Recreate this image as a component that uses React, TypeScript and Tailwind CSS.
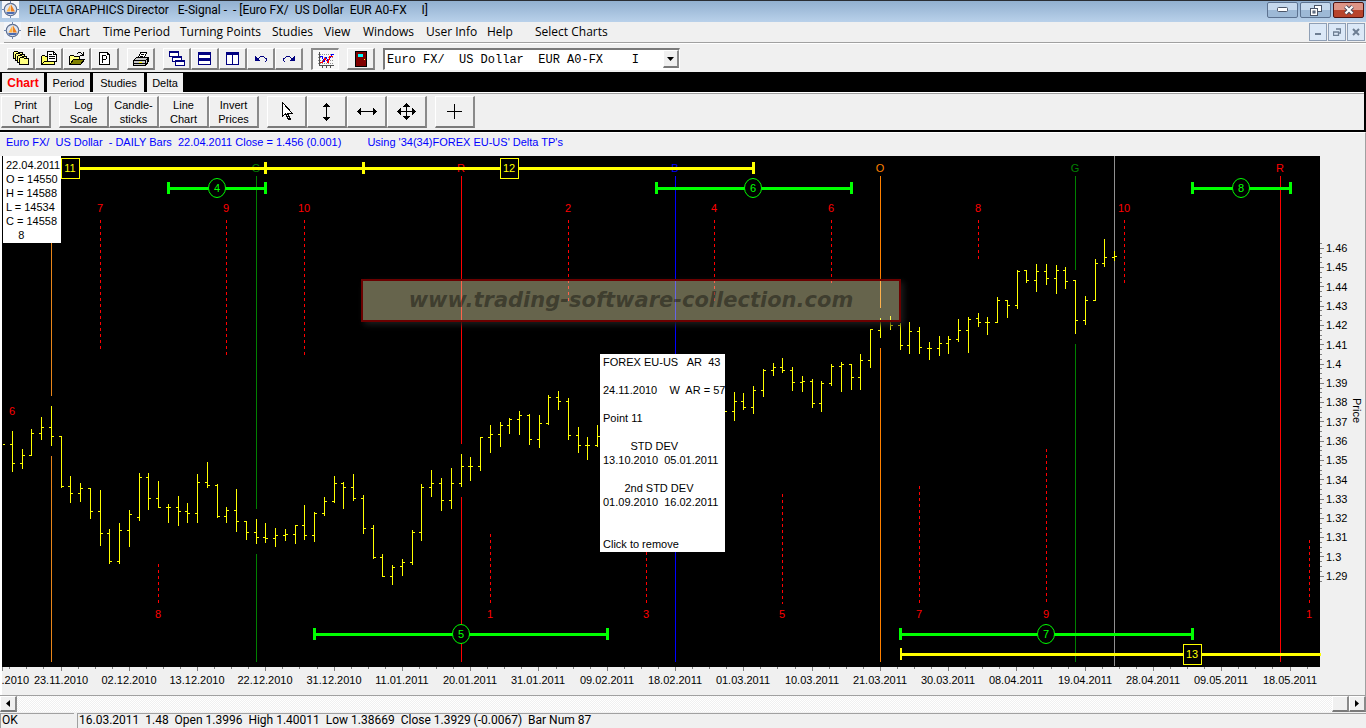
import type { ReactNode } from "react";

// x, high, low, open, close (canvas units)
const BARS: number[][] = [
  [12, 431, 472, 444, 463], [22, 449, 469, 463, 455], [31, 429, 456, 455, 433], [41, 417, 440, 433, 427],
  [51, 406, 446, 427, 436], [61, 436, 488, 436, 486], [70, 476, 503, 486, 493], [80, 483, 502, 493, 488],
  [90, 488, 519, 488, 511], [100, 490, 546, 511, 533], [109, 529, 564, 533, 561], [119, 523, 564, 561, 530],
  [129, 510, 547, 530, 514], [139, 473, 521, 517, 477], [148, 473, 510, 477, 498], [158, 481, 508, 498, 507],
  [168, 504, 523, 507, 507], [178, 496, 526, 507, 511], [187, 503, 523, 511, 513], [197, 474, 523, 513, 482],
  [207, 462, 488, 482, 485], [217, 484, 518, 485, 516], [226, 507, 523, 516, 510], [236, 489, 532, 510, 521],
  [246, 521, 540, 521, 532], [256, 519, 544, 532, 537], [265, 523, 543, 537, 538], [275, 528, 547, 538, 535],
  [285, 529, 541, 535, 534], [295, 525, 544, 534, 525], [304, 505, 540, 525, 535], [314, 512, 542, 535, 513],
  [324, 497, 516, 513, 501], [334, 476, 503, 501, 483], [343, 482, 509, 483, 487], [353, 474, 501, 487, 498],
  [363, 495, 534, 498, 528], [373, 525, 559, 528, 557], [382, 554, 577, 557, 576], [392, 565, 585, 576, 567],
  [402, 559, 576, 566, 562], [412, 530, 565, 562, 532], [421, 484, 541, 532, 487], [431, 470, 497, 487, 483],
  [441, 478, 511, 483, 500], [451, 468, 509, 500, 483], [461, 454, 487, 483, 466], [470, 457, 481, 466, 466],
  [480, 437, 471, 466, 437], [490, 425, 453, 437, 434], [500, 422, 447, 434, 425], [509, 418, 434, 425, 419],
  [519, 411, 435, 419, 415], [529, 414, 445, 415, 439], [539, 415, 448, 439, 423], [548, 395, 425, 423, 397],
  [558, 391, 410, 397, 401], [568, 398, 440, 401, 435], [578, 427, 453, 435, 445], [587, 437, 460, 445, 445],
  [597, 425, 447, 445, 436], [724, 405, 415, 409, 411], [734, 392, 421, 411, 401], [743, 393, 410, 401, 407],
  [753, 386, 414, 407, 390], [763, 369, 397, 390, 370], [773, 363, 376, 370, 367], [782, 358, 373, 367, 370],
  [792, 367, 391, 370, 382], [802, 376, 392, 382, 381], [812, 379, 408, 381, 403], [821, 381, 412, 403, 383],
  [831, 364, 386, 383, 366], [841, 362, 392, 366, 364], [851, 364, 390, 364, 377], [860, 354, 390, 377, 360],
  [870, 329, 368, 360, 329], [880, 318, 338, 330, 321], [890, 316, 330, 321, 325], [900, 323, 350, 325, 345],
  [909, 322, 354, 345, 331], [919, 327, 354, 331, 347], [929, 342, 360, 348, 348], [939, 336, 356, 348, 343],
  [948, 336, 354, 343, 339], [958, 319, 342, 339, 330], [968, 317, 353, 330, 319], [978, 313, 327, 318, 322],
  [987, 317, 335, 322, 322], [997, 297, 323, 322, 300], [1007, 300, 318, 300, 305], [1017, 270, 309, 305, 271],
  [1026, 270, 283, 270, 280], [1036, 264, 292, 280, 271], [1046, 264, 285, 271, 278], [1056, 265, 294, 278, 270],
  [1065, 267, 289, 270, 281], [1075, 280, 334, 280, 320], [1085, 296, 325, 320, 300], [1095, 259, 301, 300, 263],
  [1104, 239, 267, 263, 257], [1114, 251, 261, 257, 256],
];

const barPath =
  "M3 444.5H5" + BARS.map(([x, h, l, o, c]) => `M${x + 0.5} ${h}V${l}M${x - 2} ${o + 0.5}H${x + 1}M${x} ${c + 0.5}H${x + 3}`).join("");

// x, y1, y2, colour
const RULES: [number, number, number, string][] = [
  [51, 243, 396, "#e8851a"], [51, 456, 662, "#e8851a"],
  [256, 176, 509, "#008000"], [256, 554, 662, "#008000"],
  [461, 176, 444, "#ff0000"], [461, 497, 662, "#ff0000"],
  [675, 176, 662, "#0000ff"],
  [880, 176, 308, "#ff8000"], [880, 348, 662, "#ff8000"],
  [1075, 176, 270, "#008000"], [1075, 344, 662, "#008000"],
  [1114, 156, 666, "#909090"],
  [1280, 176, 662, "#ff0000"],
];

// x, y1, y2, label, label y
const POINTS: [number, number, number, string, number][] = [
  [100, 220, 349, "7", 212], [226, 220, 356, "9", 212], [304, 220, 356, "10", 212], [568, 220, 301, "2", 212],
  [714, 220, 302, "4", 212], [831, 220, 283, "6", 212], [978, 220, 260, "8", 212], [1124, 220, 283, "10", 212],
  [158, 564, 604, "8", 618], [490, 534, 604, "1", 618], [646, 552, 604, "3", 618], [782, 494, 604, "5", 618],
  [919, 486, 604, "7", 618], [1046, 449, 604, "9", 618], [1309, 540, 604, "1", 618],
];

const SEASONS: [number, string, string][] = [
  [256, "G", "#008000"], [461, "R", "#ff0000"], [675, "B", "#0000ff"],
  [880, "O", "#ff8000"], [1075, "G", "#008000"], [1280, "R", "#ff0000"],
];

// start, end, centre, y, label
const GREEN: [number, number, number, number, string][] = [
  [168, 265, 217, 188, "4"], [656, 851, 753, 188, "6"], [1192, 1290, 1241, 188, "8"],
  [314, 607, 461, 634, "5"], [900, 1192, 1046, 634, "7"],
];

const YELLOW_BOXES: [number, number, string][] = [[61, 158, "11"], [500, 158, "12"], [1183, 644, "13"]];

const DATES = [
  "23.11.2010", "02.12.2010", "13.12.2010", "22.12.2010", "31.12.2010", "11.01.2011", "20.01.2011",
  "31.01.2011", "09.02.2011", "18.02.2011", "01.03.2011", "10.03.2011", "21.03.2011", "30.03.2011",
  "08.04.2011", "19.04.2011", "28.04.2011", "09.05.2011", "18.05.2011",
];

const PRICES = [
  "1.46", "1.45", "1.44", "1.43", "1.42", "1.41", "1.4", "1.39", "1.38", "1.37", "1.36", "1.35", "1.34",
  "1.33", "1.32", "1.31", "1.3", "1.29",
];

function dateTicks() {
  let d = "M2.5 667V671";
  for (let i = -3; i <= 75; i++) {
    const x = Math.floor(61 + 17.07 * i) + 0.5;
    if (x < 1320) d += `M${x} 667V${i % 4 === 0 ? 671 : 669}`;
  }
  return d;
}

function priceTicks() {
  let d = "";
  for (let i = -1; i <= 69; i++) {
    const y = Math.floor(248.3 + 4.823 * i) + 0.5;
    d += `M1320 ${y}H${i % 4 === 0 ? 1324 : 1322}`;
  }
  return d;
}

function Chart() {
  return (
    <svg viewBox="0 156 1366 539" className="block w-full font-['Liberation_Sans',Arial,sans-serif] text-[11px]" role="img" aria-label="Euro FX / US Dollar daily bars">
      <rect x="0" y="156" width="2" height="539" fill="#fff" />
      <rect x="2" y="156" width="1318" height="511" fill="#000" />
      <g shapeRendering="crispEdges" fill="none">
        {RULES.map(([x, a, b, c], i) => (
          <path key={i} d={`M${x + 0.5} ${a}V${b}`} stroke={c} />
        ))}
        {POINTS.map(([x, a, b], i) => (
          <path key={i} d={`M${x + 0.5} ${a}V${b}`} stroke="#ff0000" strokeDasharray="3 3" />
        ))}
        <path d={barPath} stroke="#ffff00" />
      </g>
      <g textAnchor="middle" fill="#ff0000">
        {POINTS.map(([x, , , t, y], i) => (
          <text key={i} x={x} y={y}>{t}</text>
        ))}
        <text x="12" y="415">6</text>
        {SEASONS.map(([x, t, c]) => (
          <text key={x} x={x} y="172" fill={c}>{t}</text>
        ))}
      </g>
      <g shapeRendering="crispEdges" fill="#ffff00">
        <rect x="80" y="167" width="673" height="3" />
        <rect x="264" y="162" width="3" height="12" />
        <rect x="362" y="162" width="3" height="12" />
        <rect x="752" y="162" width="3" height="12" />
        <rect x="900" y="653" width="421" height="3" />
        <rect x="900" y="648" width="2" height="12" />
      </g>
      {YELLOW_BOXES.map(([x, y, t]) => (
        <g key={t}>
          <rect x={x + 0.5} y={y + 0.5} width="18" height="20" fill="#000" stroke="#ffff00" shapeRendering="crispEdges" />
          <text x={x + 9} y={y + 14} textAnchor="middle" fill="#ffff00">{t}</text>
        </g>
      ))}
      {GREEN.map(([a, b, c, y, t]) => (
        <g key={t} fill="#00ff00">
          <g shapeRendering="crispEdges">
            <rect x={a} y={y - 1} width={b - a} height="3" />
            <rect x={a - 1} y={y - 6} width="3" height="12" />
            <rect x={b - 1} y={y - 6} width="3" height="12" />
          </g>
          <ellipse cx={c} cy={y} rx="8.5" ry="9.5" fill="#000" stroke="#00ff00" />
          <text x={c} y={y + 4} textAnchor="middle">{t}</text>
        </g>
      ))}
      <path d={dateTicks() + priceTicks()} stroke="#808080" shapeRendering="crispEdges" />
      <g fill="#000">
        <text x="29" y="684" textAnchor="end">.2010</text>
        {DATES.map((t, i) => (
          <text key={t} x={Math.floor(61 + 68.28 * i)} y="684" textAnchor="middle">{t}</text>
        ))}
        {PRICES.map((t, i) => (
          <text key={t} x="1326" y={Math.round(252.1 + 19.29 * i)}>{t}</text>
        ))}
        <text transform="translate(1353 398) rotate(90)">Price</text>
      </g>
      <rect x="1365" y="156" width="1" height="539" fill="#a0a0a0" />
    </svg>
  );
}

function AppIcon() {
  return (
    <svg viewBox="0 0 17 17" className="h-[17px] w-[17px] shrink-0" aria-hidden="true">
      <rect width="17" height="17" fill="#f4f6fa" />
      <circle cx="8.5" cy="8.5" r="6.2" fill="#dfe6f2" stroke="#5c6c8c" strokeWidth="1.2" />
      <path d="M8.5 0v3M8.5 14v3M0 8.5h3M14 8.5h3" stroke="#6f86ad" />
      <path d="M8.5 3.5V10.5H4.5z" fill="#ffb347" />
      <path d="M9 3.5l4 7H9z" fill="#ee7f1c" />
      <path d="M4 11h9l-1.500 2h-6z" fill="#4a6ab0" />
    </svg>
  );
}

const svgProps = { viewBox: "0 0 16 16", className: "h-4 w-4", shapeRendering: "crispEdges", "aria-hidden": true } as const;

function Folder({ x, y }: { x: number; y: number }) {
  return (
    <path d={`M${x + 0.5} ${y + 1.5}l1 -1h3l1 1h4v6h-9z`} fill="#ffff80" stroke="#000" />
  );
}

const icons: Record<string, ReactNode> = {
  folders: (
    <svg {...svgProps}>
      <Folder x={0} y={0} /><Folder x={2} y={2} /><Folder x={4} y={4} /><Folder x={6} y={6} />
    </svg>
  ),
  folderDoc: (
    <svg {...svgProps}>
      <path d="M0.500 13.500v-8l1-1h2l1 1h2v8z" fill="#ffff60" stroke="#000" />
      <path d="M6.500 10.500v-10h6l3 3v7z" fill="#fff" stroke="#000" />
      <path d="M12.500 0.500v3h3M8 3.500h3M8 5.500h6M8 7.500h6" fill="none" stroke="#000" />
      <path d="M0.500 13.500l3-3h10v3z" fill="#ffff60" stroke="#000" />
    </svg>
  ),
  open: (
    <svg {...svgProps}>
      <path d="M0.500 13.500v-8l1-1h3l1 1h5v3" fill="#ffff80" stroke="#000" />
      <path d="M1 13.500L4.500 8.500H15.500L11.500 13.500z" fill="#808000" stroke="#000" />
      <path d="M8 2.500h1M9 1.500h3M12 2.500h1M13 3.500h1M11 4.500h4M14.500 1v4" fill="none" stroke="#000" />
    </svg>
  ),
  page: (
    <svg {...svgProps}>
      <path d="M2.500 1.500h8l2 2v10h-10z" fill="#fff" stroke="#000" />
      <path d="M10.500 1.500v2h2M5.500 11.500v-7h3l1 1v2l-1 1h-3" fill="none" stroke="#000" />
    </svg>
  ),
  print: (
    <svg {...svgProps}>
      <path d="M5.500 6.500l2-5h6l-2 5z" fill="#fff" stroke="#000" />
      <path d="M8 3.500h3M7 5.500h3" stroke="#000" />
      <path d="M0.500 9.500l3-3h12v4l-3 4h-12z" fill="#c8c8c8" stroke="#000" />
      <path d="M1 9.500h11.500v4M12.500 9.500l3-3M1 12.500h11M14 8v4" fill="none" stroke="#000" />
      <path d="M6 11.500h3" stroke="#ffff00" />
      <path d="M2 14.500h10" stroke="#000" />
    </svg>
  ),
  cascade: (
    <svg {...svgProps}>
      <g fill="#fff" stroke="#000080">
        <path d="M0.500 0.500h9v5h-9z" /><path d="M0 1h10" strokeWidth="2" />
        <path d="M3.500 5.500h9v5h-9z" /><path d="M3 6h10" strokeWidth="2" />
        <path d="M6.500 9.500h9v5h-9z" /><path d="M6 10h10" strokeWidth="2" />
      </g>
    </svg>
  ),
  tileH: (
    <svg {...svgProps}>
      <path d="M1.500 1.500h12v12h-12zM1 7.500h13" fill="#fff" stroke="#000080" />
      <path d="M1 2.500h13M1 8.500h13" stroke="#000080" strokeWidth="3" />
    </svg>
  ),
  tileV: (
    <svg {...svgProps}>
      <path d="M1.500 1.500h12v12h-12zM7.500 1v13" fill="#fff" stroke="#000080" />
      <path d="M1 2.500h13" stroke="#000080" strokeWidth="3" />
    </svg>
  ),
  undo: (
    <svg {...svgProps}>
      <path d="M2 5h1v1h1v1h1v1h1v1h1v1H2z" fill="#000080" />
      <path d="M5 7.500h1M6 6.500h1M7 5.500h4M11 6.500h1M12 7.500h1M13.500 7v3M12 10.500h1" stroke="#000080" />
    </svg>
  ),
  redo: (
    <svg {...svgProps}>
      <path d="M14 5h-1v1h-1v1h-1v1h-1v1H9v1h5z" fill="#000080" />
      <path d="M10 7.500h1M9 6.500h1M5 5.500h4M4 6.500h1M3 7.500h1M2.500 7v3M3 10.500h1" stroke="#000080" />
    </svg>
  ),
  graph: (
    <svg {...svgProps}>
      <path d="M1.500 0v14M1 13.500h15M4.500 13v3M8.500 13v3M12.500 13v3" stroke="#505050" fill="none" />
      <path d="M0 2.500h16M0 5.500h16M0 8.500h16M0 11.500h16" stroke="#909090" strokeDasharray="1 1" />
      <path d="M2 4.500h2l2 5 2-4 2 3 4-6h2" fill="none" stroke="#0000ff" />
      <path d="M2 10.500h2l3-4 3 4 2-6h3" fill="none" stroke="#ff0000" />
    </svg>
  ),
  door: (
    <svg {...svgProps}>
      <path d="M2.500 0.500h11v15h-11z" fill="#800000" stroke="#000" />
      <rect x="5" y="3" width="5" height="3" fill="#00ffff" />
      <rect x="11" y="8" width="1" height="1" fill="#ffff00" />
    </svg>
  ),
};

function ToolButton({ name, label, gap }: { name: string; label: string; gap?: boolean }) {
  return (
    <button
      type="button"
      aria-label={label}
      className={`flex h-[22px] w-7 items-center justify-center border-t border-l border-r-2 border-b-2 border-t-white border-l-white border-r-[#8a8a8a] border-b-[#7a7a7a] bg-[#f0f0f0] ${gap ? "ml-2" : ""}`}
    >
      {icons[name]}
    </button>
  );
}

function WideButton({ children, label, className = "w-[50px]" }: { children: ReactNode; label?: string; className?: string }) {
  return (
    <button
      type="button"
      aria-label={label}
      className={`flex h-8 items-center justify-center border-t border-l border-r-2 border-b-2 border-t-white border-l-white border-r-[#8a8a8a] border-b-[#7a7a7a] bg-[#f0f0f0] text-center text-[11px] leading-[14px] whitespace-pre ${className}`}
    >
      {children}
    </button>
  );
}

function Cursor({ d, fill = "#000" }: { d: string; fill?: string }) {
  return (
    <svg viewBox="0 0 20 20" className="h-5 w-5" shapeRendering="crispEdges" aria-hidden="true">
      <path d={d} fill={fill} stroke={fill === "#000" ? "none" : "#000"} />
    </svg>
  );
}

const MENUS: [string, string][] = [
  ["File", "w-8"], ["Chart", "w-11"], ["Time Period", "w-[77px]"], ["Turning Points", "w-[92px]"], ["Studies", "w-[52px]"],
  ["View", "w-[39px]"], ["Windows", "w-[63px]"], ["User Info", "w-[61px]"], ["Help", "w-12"], ["Select Charts", "w-20"],
];

const POPUP = [
  "FOREX EU-US   AR  43", "", "24.11.2010    W  AR = 57", "", "Point 11", "", "         STD DEV", "13.10.2010  05.01.2011", "",
  "       2nd STD DEV", "01.09.2010  16.02.2011", "", "", "Click to remove",
];

const capBtn = "flex h-4 w-[31px] items-center justify-center rounded-[2px] border";
const mdiBtn = "flex h-[18px] w-[18px] items-center justify-center border border-[#8f9fb5] bg-[#dbe8f7]";

export default function App() {
  return (
    <div className="flex min-h-[728px] w-full flex-col overflow-hidden bg-[#f0f0f0] font-['Liberation_Sans',Arial,sans-serif] text-[11px] text-black">
      <header className="flex h-[22px] items-start border-t border-[#2a2d33] bg-linear-to-b from-[#92b0d0] to-[#b9d1ea] pr-[2px] pl-[2px]">
        <AppIcon />
        <h1 className="ml-[10px] flex-1 font-['Roboto','Open_Sans',sans-serif] text-[12px] leading-[19px] whitespace-pre">DELTA GRAPHICS Director   E-Signal -  - [Euro FX/  US Dollar  EUR A0-FX     I]</h1>
        <div className="flex gap-[2px] pt-px">
          <button type="button" aria-label="Minimize" className={`${capBtn} border-[#5c7290] bg-linear-to-b from-[#c5d8ec] from-50% to-[#9db9d6] to-50%`}>
            <svg viewBox="0 0 12 6" className="h-[6px] w-3"><rect x="0.500" y="0.500" width="10" height="4" rx="1" fill="#fff" stroke="#4a5568" /></svg>
          </button>
          <button type="button" aria-label="Restore" className={`${capBtn} border-[#5c7290] bg-linear-to-b from-[#c5d8ec] from-50% to-[#9db9d6] to-50%`}>
            <svg viewBox="0 0 12 11" className="h-[11px] w-3">
              <rect x="4.500" y="0.500" width="7" height="6" fill="#fff" stroke="#4a5568" />
              <rect x="0.500" y="3.500" width="7" height="7" fill="#fff" stroke="#4a5568" />
              <rect x="3" y="6" width="2" height="2" fill="#9db9d6" stroke="#4a5568" />
            </svg>
          </button>
          <button type="button" aria-label="Close" className={`${capBtn} border-[#4e1210] bg-linear-to-b from-[#dd9486] from-50% to-[#b8442c] to-50%`}>
            <svg viewBox="0 0 12 10" className="h-[10px] w-3">
              <path d="M2.500 1.500l7 7M9.500 1.500l-7 7" stroke="#4a4a5c" strokeWidth="4" />
              <path d="M2.500 1.500l7 7M9.500 1.500l-7 7" stroke="#fff" strokeWidth="2.200" />
            </svg>
          </button>
        </div>
      </header>

      <nav className="flex h-[22px] items-start border-b border-white pl-1 font-['Open_Sans','Noto_Sans',sans-serif] text-[12px]">
        <div className="flex h-[21px] flex-1 border-b border-[#a0a0a0]">
          <AppIcon />
          <div className="flex flex-1 pl-[6px]">
            {MENUS.map(([t, w]) => (
              <button key={t} type="button" className={`${w} text-left leading-[18px] whitespace-nowrap`}>{t}</button>
            ))}
          </div>
          <div className="flex gap-px pt-px pr-px">
            <button type="button" aria-label="Minimize chart" className={mdiBtn}>
              <svg viewBox="0 0 8 8" className="h-2 w-2"><rect x="1" y="5" width="6" height="2" fill="#6d7e93" /></svg>
            </button>
            <button type="button" aria-label="Restore chart" className={mdiBtn}>
              <svg viewBox="0 0 8 8" className="h-2 w-2" fill="none" stroke="#6d7e93"><path d="M3 1h4.500v4H6M0.500 4h5v3.500h-5z" strokeWidth="1.300" /></svg>
            </button>
            <button type="button" aria-label="Close chart" className={mdiBtn}>
              <svg viewBox="0 0 8 8" className="h-2 w-2"><path d="M1 1l6 6M7 1L1 7" stroke="#6d7e93" strokeWidth="2" /></svg>
            </button>
          </div>
        </div>
      </nav>

      <div className="flex h-7 items-start pt-1 pl-[7px]">
        <ToolButton name="folders" label="Open group" />
        <ToolButton name="folderDoc" label="Open chart" />
        <ToolButton name="open" label="Open file" />
        <ToolButton name="page" label="Page" />
        <ToolButton name="print" label="Print" gap />
        <ToolButton name="cascade" label="Cascade" gap />
        <ToolButton name="tileH" label="Tile horizontally" />
        <ToolButton name="tileV" label="Tile vertically" />
        <ToolButton name="undo" label="Undo" />
        <ToolButton name="redo" label="Redo" />
        <button type="button" aria-label="Graph" aria-pressed="true" className="ml-2 flex h-[22px] w-7 items-center justify-center border-t-2 border-l-2 border-r border-b border-t-[#8a8a8a] border-l-[#8a8a8a] border-r-white border-b-white bg-[#f8f8f8]">
          {icons.graph}
        </button>
        <ToolButton name="door" label="Exit" gap />
        <div className="relative ml-2 h-[22px] w-[297px] border-t-2 border-l-2 border-r border-b border-t-[#7a7a7a] border-l-[#7a7a7a] border-r-white border-b-white bg-white">
          <select aria-label="Instrument" className="h-[19px] w-full appearance-none bg-white pl-[2px] font-['Liberation_Mono','Courier_New',monospace] text-[12px] outline-none">
            <option>{"Euro FX/\u00a0\u00a0US Dollar\u00a0\u00a0EUR A0-FX\u00a0\u00a0\u00a0\u00a0I"}</option>
          </select>
          <span className="pointer-events-none absolute top-0 right-0 flex h-[18px] w-4 items-center justify-center border-t border-l border-r-2 border-b-2 border-t-white border-l-white border-r-[#8a8a8a] border-b-[#7a7a7a] bg-[#f0f0f0]">
            <svg viewBox="0 0 7 4" className="h-1 w-[7px]"><path d="M0 0h7L3.500 4z" /></svg>
          </span>
        </div>
      </div>

      <div className="border-r-2 border-black">
        <div role="tablist" className="flex h-5 gap-[3px] bg-black pt-px pl-[2px]">
          <button role="tab" aria-selected="true" type="button" className="w-[42px] bg-[#f0f0f0] text-[12px] leading-[18px] font-bold text-[#ff0000]">Chart</button>
          <button role="tab" aria-selected="false" type="button" className="w-[43px] bg-[#f0f0f0] pt-[2px]">Period</button>
          <button role="tab" aria-selected="false" type="button" className="w-[51px] bg-[#f0f0f0] pt-[2px]">Studies</button>
          <button role="tab" aria-selected="false" type="button" className="w-9 bg-[#f0f0f0] pt-[2px]">Delta</button>
        </div>
        <div className="flex h-[38px] items-start border-t border-white">
          <div className="flex h-[37px] flex-1 items-start border-t border-[#a0a0a0] pt-[2px] pl-px">
            <WideButton>{"Print\nChart"}</WideButton>
            <div className="ml-2 flex">
              <WideButton>{"Log\nScale"}</WideButton>
              <WideButton>{"Candle-\nsticks"}</WideButton>
              <WideButton>{"Line\nChart"}</WideButton>
              <WideButton>{"Invert\nPrices"}</WideButton>
            </div>
            <div className="ml-2 flex">
              <WideButton className="w-10" label="Pointer"><Cursor fill="#fff" d="M5.500 0.500v14l3-3 3 6h2l-3-6h5z" /></WideButton>
              <WideButton className="w-10" label="Vertical"><Cursor d="M9 1h1v1h1v1h1v1h1v1h-3v10h3v1h-1v1h-1v1h-1v1H9v-1H8v-1H7v-1H6v-1h3V5H6V4h1V3h1V2h1z" /></WideButton>
              <WideButton className="w-10" label="Horizontal"><Cursor d="M0 9h1V8h1V7h1V6h1v3h12V6h1v1h1v1h1v1h1v1h-1v1h-1v1h-1v1h-1v-3H4v3H3v-1H2v-1H1v-1H0z" /></WideButton>
              <WideButton className="w-10" label="Move"><Cursor d="M9 1h1v1h1v1h1v1h1v1h-3v4h5V6h1v1h1v1h1v1h1v1h-1v1h-1v1h-1v1h-1v-3h-5v4h3v1h-1v1h-1v1h-1v1H9v-1H8v-1H7v-1H6v-1h3v-4H4v3H3v-1H2v-1H1v-1H0V9h1V8h1V7h1V6h1v3h5V5H6V4h1V3h1V2h1z" /></WideButton>
            </div>
            <div className="ml-2 flex">
              <WideButton className="w-10" label="Crosshair"><Cursor d="M9 2h1v7h7v1h-7v7H9v-7H2V9h7z" /></WideButton>
            </div>
          </div>
        </div>
      </div>

      <main className="border-t-2 border-black">
        <div className="flex h-6 items-center gap-[26px] border-t border-r border-t-white border-r-[#a0a0a0] pb-1 pl-[6px] whitespace-pre text-[#0000ff]">
          <span>Euro FX/  US Dollar  - DAILY Bars  22.04.2011 Close = 1.456 (0.001)</span>
          <span>Using '34(34)FOREX EU-US' Delta TP's</span>
        </div>
        <div className="relative">
          <Chart />
          <div className="absolute top-[123px] left-[361px] flex h-[43px] w-[540px] items-center justify-center border-2 border-[#6b0000] bg-[#fffabe]/40 font-['DejaVu_Sans',sans-serif] text-[21px] font-bold text-black/40 italic shadow-[3px_3px_6px_#1c1c1c]">
            www.trading-software-collection.com
          </div>
          <div className="absolute top-0 left-[3px] h-[87px] w-[58px] bg-white pt-[2px] pl-[3px] leading-[14px] whitespace-pre">
            {"22.04.2011\nO = 14550\nH = 14588\nL = 14534\nC = 14558\n    8"}
          </div>
          <button type="button" className="absolute top-[198px] left-[600px] h-[198px] w-[125px] bg-white pl-[3px] text-left leading-[14px] whitespace-pre">
            {POPUP.join("\n")}
          </button>
        </div>
      </main>

      <div className="flex h-[17px] border-t border-[#a0a0a0] bg-[repeating-conic-gradient(#f0f0f0_0_25%,#ffffff_0_50%)] bg-[length:2px_2px]">
        <button type="button" aria-label="Scroll left" className="flex w-[17px] items-center justify-center border-t border-l border-r-2 border-b-2 border-t-white border-l-white border-r-[#8a8a8a] border-b-[#7a7a7a] bg-[#f0f0f0]">
          <svg viewBox="0 0 4 7" className="h-[7px] w-1"><path d="M4 0v7L0 3.500z" /></svg>
        </button>
        <div className="flex-1" />
        <button type="button" aria-label="Scroll thumb" className="w-[17px] border-t border-l border-r-2 border-b-2 border-t-white border-l-white border-r-[#8a8a8a] border-b-[#7a7a7a] bg-[#f0f0f0]" />
        <button type="button" aria-label="Scroll right" className="flex w-[17px] items-center justify-center border-t border-l border-r-2 border-b-2 border-t-white border-l-white border-r-[#8a8a8a] border-b-[#7a7a7a] bg-[#f0f0f0]">
          <svg viewBox="0 0 4 7" className="h-[7px] w-1"><path d="M0 0v7l4-3.500z" /></svg>
        </button>
      </div>

      <footer className="flex h-4 items-end gap-[3px] font-['Roboto','Open_Sans',sans-serif] text-[12px] leading-[13px] whitespace-pre">
        <div className="h-[15px] w-[74px] border-t border-l border-[#a0a0a0] pl-px">OK</div>
        <div className="h-[15px] flex-1 border-t border-l border-[#a0a0a0] pl-px">16.03.2011  1.48  Open 1.3996  High 1.40011  Low 1.38669  Close 1.3929 (-0.0067)  Bar Num 87</div>
      </footer>
    </div>
  );
}
